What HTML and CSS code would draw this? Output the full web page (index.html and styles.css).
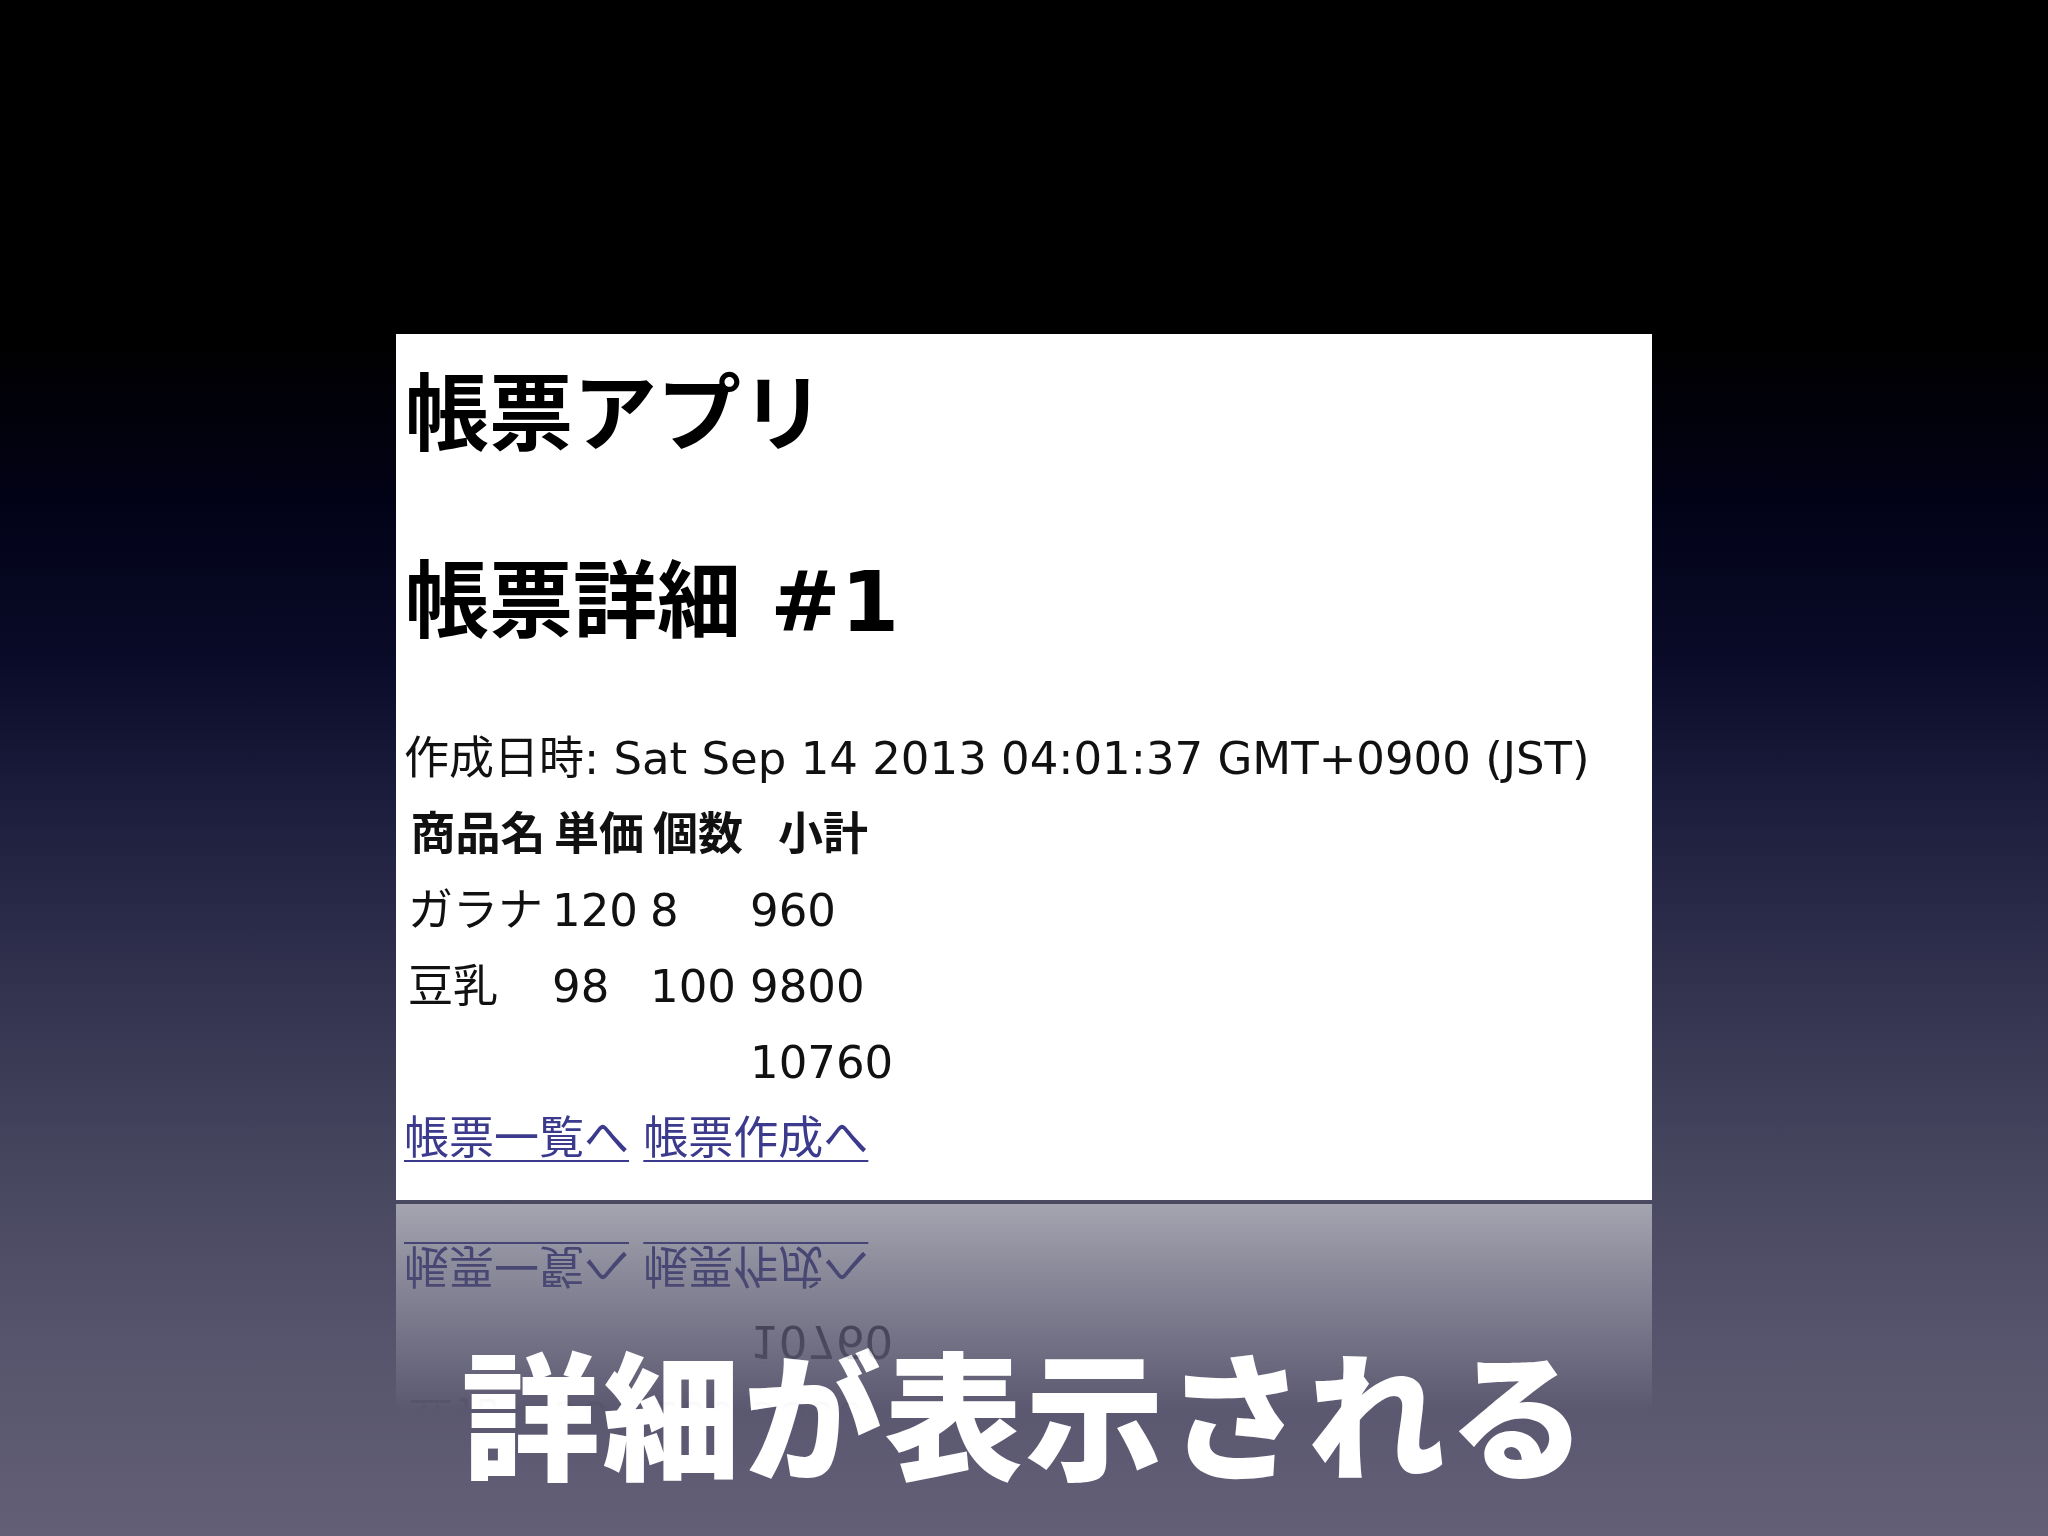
FILE: index.html
```html
<!DOCTYPE html>
<html lang="ja">
<head>
<meta charset="utf-8">
<title>帳票アプリ</title>
<link rel="stylesheet" href="styles.css">
</head>
<body>
<div class="slide">
  <div class="screen">
    <h1 class="app-title">帳票アプリ</h1>
    <h2 class="detail-title">帳票詳細 #1</h2>
    <p class="created">作成日時: Sat Sep 14 2013 04:01:37 GMT+0900 (JST)</p>
    <table class="items">
      <colgroup>
        <col class="c-name"><col class="c-price"><col class="c-qty"><col class="c-sub">
      </colgroup>
      <thead>
        <tr><th>商品名</th><th>単価</th><th>個数</th><th>小計</th></tr>
      </thead>
      <tbody>
        <tr><td>ガラナ</td><td>120</td><td>8</td><td>960</td></tr>
        <tr><td>豆乳</td><td>98</td><td>100</td><td>9800</td></tr>
        <tr><td></td><td></td><td></td><td>10760</td></tr>
      </tbody>
    </table>
    <p class="links"><a href="#">帳票一覧へ</a> <a href="#">帳票作成へ</a></p>
  </div>
  <p class="caption">詳細が表示される</p>
</div>
</body>
</html>
```

FILE: styles.css
```css
html, body {
  margin: 0;
  padding: 0;
}

body {
  width: 2048px;
  height: 1536px;
  overflow: hidden;
  background: linear-gradient(to bottom,
    #000000 0%,
    #000000 22%,
    #03031a 34%,
    #0a0b28 43%,
    #1c1d3c 52%,
    #32324f 64%,
    #47465f 76%,
    #56546c 87%,
    #625f77 100%);
  font-family: "DejaVu Sans", "Noto Sans CJK JP", sans-serif;
}

.slide {
  height: 1536px;
  box-sizing: border-box;
  padding-top: 334px;
  display: flex;
  flex-direction: column;
  align-items: center;
}

.screen {
  width: 1256px;
  height: 866px;
  box-sizing: border-box;
  padding: 0 0 0 8px;
  background: #ffffff;
  color: #000;
  display: flow-root;
  -webkit-box-reflect: below 4px linear-gradient(to bottom, transparent 76%, rgba(0, 0, 0, 0.5));
}

.app-title,
.detail-title {
  font-size: 84px;
  font-weight: bold;
  line-height: 100px;
  margin: 0;
  padding-left: 1px;
}

.app-title {
  margin-top: 31px;
}

.detail-title {
  margin-top: 87px;
}

.created {
  margin: 69px 0 0 0;
  font-size: 45px;
  line-height: 76px;
  color: #111;
}

.items {
  border-collapse: collapse;
  border-spacing: 0;
  table-layout: fixed;
  width: 492px;
  font-size: 45px;
  color: #111;
}

.c-name { width: 144px; }
.c-price { width: 98px; }
.c-qty { width: 100px; }
.c-sub { width: 150px; }

.items th,
.items td {
  height: 76px;
  line-height: 76px;
  padding: 0 0 0 4px;
  white-space: nowrap;
}

.items th {
  font-weight: bold;
  text-align: center;
}

.items td {
  text-align: left;
  font-weight: normal;
}

.links {
  margin: 0;
  font-size: 45px;
  line-height: 76px;
}

.links a {
  color: #3b3a8c;
  text-decoration: underline;
  text-decoration-thickness: 2px;
  text-underline-offset: 6px;
}

.caption {
  margin: 129px 0 0 0;
  font-family: "Noto Sans CJK JP", sans-serif;
  font-size: 138px;
  font-weight: 900;
  line-height: 160px;
  color: #ffffff;
  letter-spacing: 3px;
  text-indent: 3px;
}
```
